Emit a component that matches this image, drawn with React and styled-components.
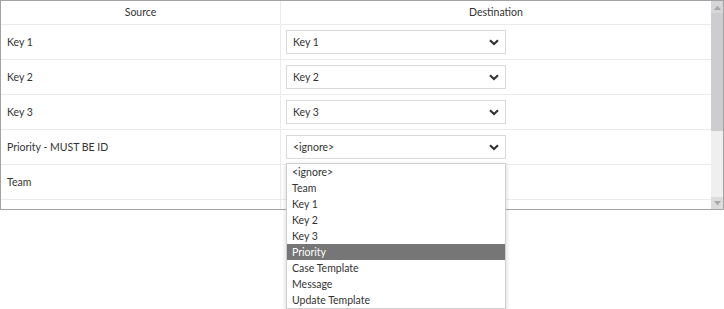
import React from "react";
import styled, { createGlobalStyle } from "styled-components";

const Global = createGlobalStyle`
  html, body { margin: 0; padding: 0; background: #fff; }
  body { font-family: "Segoe UI", Lato, sans-serif; font-size: 10.5px; color: #333; }
`;

const Page = styled.div`
  position: relative;
  width: 724px;
  height: 309px;
`;

const Frame = styled.div`
  box-sizing: border-box;
  width: 724px;
  height: 210px;
  border: 1px solid #a3a3a3;
  display: flex;
  overflow: hidden;
`;

const Content = styled.div`
  flex: 1;
  overflow: hidden;
`;

const Table = styled.div`
  display: grid;
  grid-template-columns: 279px 1fr;
`;

const HeadCell = styled.div`
  height: 23px;
  line-height: 23px;
  text-align: center;
  border-bottom: 1px solid #ebebeb;
  border-left: ${(p) => (p.$first ? "none" : "1px solid #ebebeb")};
`;

const Cell = styled.div`
  height: 34px;
  display: flex;
  align-items: center;
  border-bottom: 1px solid #ebebeb;
  border-left: ${(p) => (p.$first ? "none" : "1px solid #ebebeb")};
  padding-left: ${(p) => (p.$first ? "6px" : "5px")};
`;

const Select = styled.div`
  box-sizing: border-box;
  width: 220px;
  height: 24px;
  border: 1px solid #d9d9d9;
  display: flex;
  align-items: center;
  justify-content: space-between;
  padding: 0 6px 0 6px;
  background: #fff;
`;

const Scrollbar = styled.div`
  width: 12px;
  display: flex;
  flex-direction: column;
  background: #efefef;
`;

const Arrow = styled.div`
  height: 12px;
  background: ${(p) => (p.$down ? "#dcdcdc" : "#d6d6d9")};
  display: flex;
  align-items: center;
  justify-content: center;
`;

const Thumb = styled.div`
  height: 118px;
  background: #cdcdd1;
`;

const Track = styled.div`
  flex: 1;
`;

const Popup = styled.ul`
  position: absolute;
  left: 286px;
  top: 163px;
  box-sizing: border-box;
  width: 220px;
  margin: 0;
  padding: 0;
  list-style: none;
  background: #fff;
  border: 1px solid #cfcfcf;
  box-shadow: 0 2px 5px rgba(0, 0, 0, 0.18);
`;

const Option = styled.li`
  height: 16px;
  line-height: 16px;
  padding-left: 5px;
  background: ${(p) => (p.$active ? "#767676" : "transparent")};
  color: ${(p) => (p.$active ? "#fff" : "#333")};
`;

const Chevron = () => (
  <svg width="10" height="7" viewBox="0 0 10 7">
    <path d="M1 1.2 L5 5 L9 1.2" fill="none" stroke="#333" strokeWidth="2.2" />
  </svg>
);

const Tri = ({ down }) => (
  <svg width="7" height="5" viewBox="0 0 7 5">
    <path d={down ? "M0 0 H7 L3.5 4.5 Z" : "M0 5 H7 L3.5 0.5 Z"} fill="#a9a9a9" />
  </svg>
);

const rows = [
  ["Key 1", "Key 1"],
  ["Key 2", "Key 2"],
  ["Key 3", "Key 3"],
  ["Priority - MUST BE ID", "<ignore>"],
  ["Team", null],
  ["", null],
];

const options = [
  "<ignore>",
  "Team",
  "Key 1",
  "Key 2",
  "Key 3",
  "Priority",
  "Case Template",
  "Message",
  "Update Template",
];

export default function App() {
  return (
    <Page>
      <Global />
      <Frame>
        <Content>
          <Table>
            <HeadCell $first>Source</HeadCell>
            <HeadCell>Destination</HeadCell>
            {rows.map(([src, dst], i) => (
              <React.Fragment key={i}>
                <Cell $first>{src}</Cell>
                <Cell>
                  {dst && (
                    <Select>
                      <span>{dst}</span>
                      <Chevron />
                    </Select>
                  )}
                </Cell>
              </React.Fragment>
            ))}
          </Table>
        </Content>
        <Scrollbar>
          <Arrow>
            <Tri />
          </Arrow>
          <Thumb />
          <Track />
          <Arrow $down>
            <Tri down />
          </Arrow>
        </Scrollbar>
      </Frame>
      <Popup>
        {options.map((o) => (
          <Option key={o} $active={o === "Priority"}>
            {o}
          </Option>
        ))}
      </Popup>
    </Page>
  );
}
